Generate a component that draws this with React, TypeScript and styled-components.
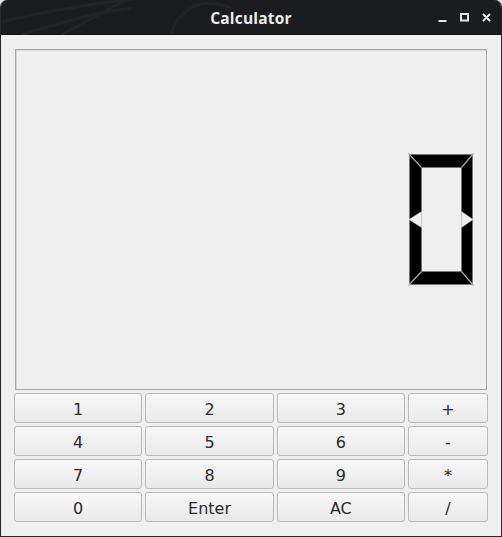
import React from "react";
import styled, { createGlobalStyle } from "styled-components";

const Global = createGlobalStyle`
  html, body { margin: 0; padding: 0; background: #e4e4e4; }
  #root { width: 502px; height: 537px; }
  * { box-sizing: border-box; }
`;

const Window = styled.div`
  width: 502px;
  height: 537px;
  display: flex;
  flex-direction: column;
  border: 1px solid #2a2a2c;
  border-top: none;
  border-radius: 7px 7px 0 0;
  overflow: hidden;
  background: #efefef;
`;

const TitleBar = styled.div`
  position: relative;
  height: 35px;
  flex: none;
  display: grid;
  grid-template-columns: 1fr auto 1fr;
  align-items: center;
  background: #1b1c20;
  border-bottom: 1px solid #111214;
`;

const Decor = styled.svg`
  position: absolute;
  inset: 0;
  pointer-events: none;
`;

const Title = styled.div`
  grid-column: 2;
  position: relative;
  font-family: "Open Sans", "DejaVu Sans", sans-serif;
  font-weight: 700;
  font-size: 15.5px;
  color: #ececec;
  letter-spacing: 0.2px;
  margin-top: 2px;
`;

const Controls = styled.div`
  grid-column: 3;
  justify-self: end;
  display: flex;
  align-items: center;
  gap: 13px;
  padding-right: 10px;
  position: relative;
`;

const ControlIcon = styled.svg`
  width: 9px;
  height: 9px;
  display: block;
`;

const Content = styled.div`
  flex: 1;
  display: flex;
  flex-direction: column;
  gap: 3px;
  padding: 14px 13px 14px 13px;
`;

const Display = styled.div`
  flex: 1;
  margin: 0 1px;
  border: 1px solid #a6a6a6;
  box-shadow: inset 1px 1px 0 #d6d6d6;
  background: #efefef;
  display: flex;
  align-items: center;
  justify-content: flex-end;
  padding-right: 13px;
`;

const Keypad = styled.div`
  display: grid;
  grid-template-columns: 1fr 1fr 1fr 80px;
  grid-auto-rows: 30px;
  gap: 3px;
`;

const Key = styled.button`
  border: 1px solid #b9b9b9;
  border-radius: 3px;
  background: linear-gradient(#f8f8f8, #e9e9e9);
  font-family: "DejaVu Sans", sans-serif;
  font-size: 16px;
  color: #2a2a2a;
  padding: 2px 0 0 0;
  cursor: pointer;
  display: flex;
  align-items: center;
  justify-content: center;
`;

const segs = [
  "0,0 63,0 52,13 12,13",
  "0,0 12,13 12,58 0,65",
  "0,65 12,72 12,117 0,130",
  "0,130 12,117 52,117 63,130",
  "63,0 63,65 52,58 52,13",
  "63,65 63,130 52,117 52,72",
];

const Digit = () => (
  <svg width="64" height="131" viewBox="-0.5 -0.5 64 131" style={{ overflow: "visible" }}>
    {segs.map((p, i) => (
      <polygon key={i} points={p} fill="#000" />
    ))}
    <g stroke="#a8a8a8" strokeWidth="1.2" fill="none">
      <line x1="-1" y1="-1" x2="12" y2="13" />
      <line x1="64" y1="-1" x2="52" y2="13" />
      <line x1="-1" y1="131" x2="12" y2="117" />
      <line x1="64" y1="131" x2="52" y2="117" />
    </g>
    <g fill="#efefef" stroke="#b8b8b8" strokeWidth="0.6">
      <polygon points="12,57 12,73 -0.5,65" />
      <polygon points="52,57 52,73 63.5,65" />
    </g>
  </svg>
);

const keys = ["1", "2", "3", "+", "4", "5", "6", "-", "7", "8", "9", "*", "0", "Enter", "AC", "/"];

export default function App() {
  return (
    <>
      <Global />
      <Window>
        <TitleBar>
          <Decor width="502" height="35" viewBox="0 0 502 35">
            <g fill="none" stroke="#222328" strokeWidth="3">
              <path d="M0 22 C 40 12, 90 4, 140 -2" />
              <path d="M20 35 C 60 22, 100 12, 130 8" />
              <path d="M170 34 C 175 18, 185 8, 200 4 C 210 2, 220 4, 230 8" />
              <path d="M60 35 L 125 0" />
            </g>
          </Decor>
          <Title>Calculator</Title>
          <Controls>
            <ControlIcon viewBox="0 0 9 9">
              <rect x="0.5" y="7" width="8" height="2" fill="#e6e6e6" />
            </ControlIcon>
            <ControlIcon viewBox="0 0 9 9">
              <rect x="1" y="1" width="7" height="6.5" fill="none" stroke="#e6e6e6" strokeWidth="2" />
            </ControlIcon>
            <ControlIcon viewBox="0 0 9 9">
              <path d="M1 1 L8 8 M8 1 L1 8" stroke="#e6e6e6" strokeWidth="2" />
            </ControlIcon>
          </Controls>
        </TitleBar>
        <Content>
          <Display>
            <Digit />
          </Display>
          <Keypad>
            {keys.map((k) => (
              <Key key={k}>{k}</Key>
            ))}
          </Keypad>
        </Content>
      </Window>
    </>
  );
}
